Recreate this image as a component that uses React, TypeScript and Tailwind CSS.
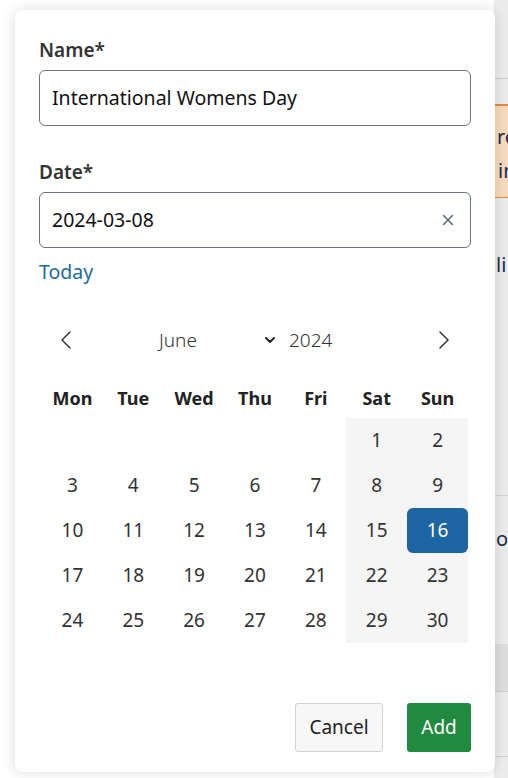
import { ChevronLeft, ChevronRight, ChevronDown, X } from 'lucide-react';

// June 2024 starts on a Saturday (Mon-first grid)
const weekdays = ['Mon', 'Tue', 'Wed', 'Thu', 'Fri', 'Sat', 'Sun'];
const cells: (number | null)[] = [
  null, null, null, null, null,
  ...Array.from({ length: 30 }, (_, i) => i + 1),
];
const selected = 16;

function BackgroundPage() {
  // What peeks out to the right of the dialog
  return (
    <div className="absolute inset-0 bg-white" aria-hidden="true">
      <div className="absolute left-[494px] top-0 right-0 bottom-0 bg-[#ececec] flex flex-col">
        <div className="h-[79px] border-b border-[#c9c9c9]" />
        <div className="mt-[25px] h-[94px] bg-[#f6dcbc] border-t-2 border-b border-[#e88a3a] pl-[3px] text-[20px] text-[#1b2a4a] leading-[34px] pt-[14px]">
          <div>re</div>
          <div className="pl-[1px]">in</div>
        </div>
        <div className="mt-[52px] pl-[2px] text-[20px] text-[#1b2a4a]">li</div>
        <div className="mt-[215px] border-t border-[#d4d4d4]" />
        <div className="mt-[28px] pl-[2px] text-[20px] text-[#1b2a4a]">o</div>
        <div className="mt-[90px] h-[48px] bg-[#dedede] border-b border-[#cfcfcf]" />
        <div className="mt-[64px] border-t border-[#d4d4d4]" />
      </div>
    </div>
  );
}

export default function App() {
  return (
    <div
      className="relative h-[778px] w-[508px] overflow-hidden"
      style={{ fontFamily: '"Noto Sans", "Open Sans", sans-serif' }}
    >
      <BackgroundPage />

      {/* Dialog */}
      <div className="relative ml-[15px] mt-[10px] w-[480px] h-[762px] bg-white rounded-lg shadow-[0_0_14px_rgba(0,0,0,0.14)] px-6 pt-[26px] pb-5 flex flex-col">
        <label className="text-[19px] leading-[28px] font-semibold text-[#333]">Name*</label>
        <div className="mt-[6px] h-[56px] rounded-md border border-[#6c757d] flex items-center px-3 text-[19.5px] text-[#111]">
          International Womens Day
        </div>

        <label className="mt-[32px] text-[19px] leading-[28px] font-semibold text-[#333]">Date*</label>
        <div className="mt-[6px] h-[56px] rounded-md border border-[#6c757d] flex items-center justify-between pl-3 pr-[13px] text-[19.5px] text-[#111]">
          <span>2024-03-08</span>
          <X className="w-[18px] h-[18px] text-[#5f6670]" strokeWidth={2} />
        </div>

        <a className="mt-[10px] text-[19.5px] leading-[28px] text-[#1d69a6] self-start">Today</a>

        {/* Calendar */}
        <div className="mt-[34px] px-[3px]">
          <div className="h-[40px] flex items-center text-[19px] font-light text-[#333]">
            <div className="w-[48px] flex justify-center">
              <ChevronLeft className="w-[32px] h-[32px]" strokeWidth={1.1} />
            </div>
            <div className="ml-[69px] w-[103px]">June</div>
            <ChevronDown className="w-[16px] h-[16px] text-[#222]" strokeWidth={3} />
            <div className="ml-[11px]">2024</div>
            <div className="ml-auto w-[48px] flex justify-center">
              <ChevronRight className="w-[32px] h-[32px]" strokeWidth={1.1} />
            </div>
          </div>

          <div className="mt-[18px] grid grid-cols-7">
            {weekdays.map((d) => (
              <div key={d} className="h-[40px] flex items-center justify-center text-[18px] font-bold text-[#222]">
                {d}
              </div>
            ))}
            {cells.map((n, i) => {
              const weekend = i % 7 >= 5;
              const isSel = n === selected;
              return (
                <div
                  key={i}
                  className={`h-[45px] flex items-center justify-center text-[19px] ${
                    weekend ? 'bg-[#f5f5f5]' : ''
                  }`}
                >
                  {n !== null &&
                    (isSel ? (
                      <div className="w-full h-full rounded-md bg-[#1d66a3] text-white flex items-center justify-center">
                        {n}
                      </div>
                    ) : (
                      <span className="text-[#333]">{n}</span>
                    ))}
                </div>
              );
            })}
          </div>
        </div>

        {/* Actions */}
        <div className="mt-auto flex justify-end gap-6">
          <button className="h-[49px] w-[88px] rounded-[3px] border border-[#cfd3d8] bg-[#f7f7f7] text-[19px] text-[#222]">
            Cancel
          </button>
          <button className="h-[49px] w-[64px] rounded-[3px] bg-[#208a3e] text-[19px] text-white">
            Add
          </button>
        </div>
      </div>
    </div>
  );
}
